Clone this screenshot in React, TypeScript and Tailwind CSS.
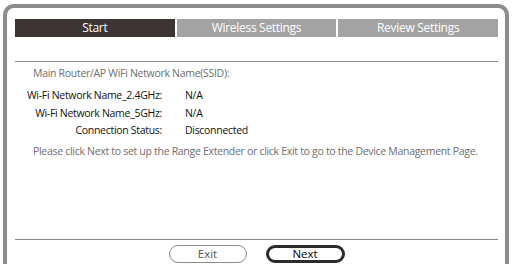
export default function App() {
  const rows = [
    { label: 'Wi-Fi Network Name_2.4GHz:', value: 'N/A' },
    { label: 'Wi-Fi Network Name_5GHz:', value: 'N/A' },
    { label: 'Connection Status:', value: 'Disconnected' },
  ]

  return (
    <div
      className="w-[522px] h-[273px] bg-white pt-[4px] pl-[3px] overflow-hidden"
      style={{ fontFamily: '"Open Sans", "Liberation Sans", sans-serif' }}
    >
      <div className="w-[506px] h-[260px] border-4 border-b-0 border-[#8c8c8c] rounded-t-[11px] pt-[11px] pl-[8px] pr-[7px] flex flex-col">
        {/* Tabs */}
        <div className="grid grid-cols-3 gap-[2px] h-[18px] text-[12px] tracking-[-0.3px] leading-[18px] text-white text-center">
          <div className="bg-[#3b3533]">Start</div>
          <div className="bg-[#a3a3a3]">Wireless Settings</div>
          <div className="bg-[#a3a3a3]">Review Settings</div>
        </div>

        <div className="mt-[24px] border-t border-[#8a8a8a]" />

        {/* Info */}
        <div className="text-[10.5px] tracking-[-0.3px]">
          <p className="mt-[2px] h-[18px] leading-[18px] pl-[18px] text-[#6e6e6e]">
            Main Router/AP WiFi Network Name(SSID):
          </p>
          <div className="mt-[5px] flex flex-col">
            {rows.map(r => (
              <div key={r.label} className="flex h-[17.5px] leading-[17.5px] text-[#111]">
                <span className="w-[147px] text-right">{r.label}</span>
                <span className="ml-[23px]">{r.value}</span>
              </div>
            ))}
          </div>
          <p className="mt-[2px] h-[18px] leading-[18px] pl-[18px] text-[#6e6e6e]">
            Please click Next to set up the Range Extender or click Exit to go to the Device Management Page.
          </p>
        </div>

        <div className="flex-1" />

        {/* Footer */}
        <div className="border-t border-[#8a8a8a]" />
        <div className="mt-[5px] mb-[1px] flex justify-center gap-[19px] text-[11.5px]">
          <button className="w-[78px] h-[18px] rounded-full border border-[#8a8a8a] text-[#555] leading-[16px]">
            Exit
          </button>
          <button className="w-[79px] h-[18px] rounded-full border-[3px] border-[#2b2b2b] text-black leading-[12px]">
            Next
          </button>
        </div>
      </div>
    </div>
  )
}
